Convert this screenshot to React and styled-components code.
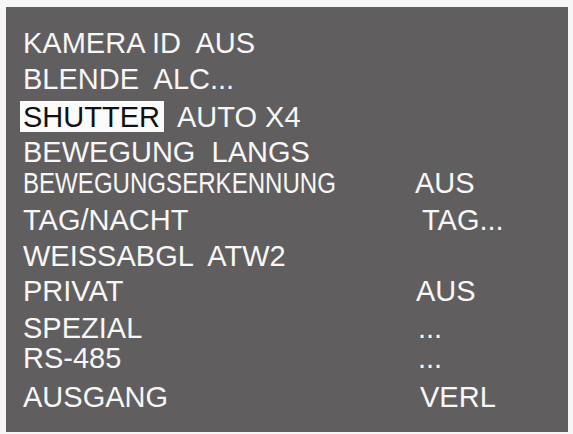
import React from "react";
import styled, { createGlobalStyle } from "styled-components";

const Global = createGlobalStyle`
  html, body {
    margin: 0;
    padding: 0;
    background: #f6f6f6;
  }
`;

// css
const Page = styled.div`
  width: 573px;
  height: 434px;
  padding: 7px 5px 2px 6px;
  box-sizing: border-box;
`;

const Screen = styled.div`
  width: 100%;
  height: 100%;
  background: #615e5f;
  box-sizing: border-box;
  padding: 22px 0 0 17px;
  display: flex;
  flex-direction: column;
  font-family: "Liberation Sans", Arial, sans-serif;
  font-size: 29px;
  color: #f7f7f7;
`;

const Row = styled.div`
  display: grid;
  grid-template-columns: 392px auto;
  height: 28px;
  line-height: 28px;
  margin-top: ${(props) => props.top || 0}px;
  white-space: pre;
`;

const Label = styled.div`
  display: flex;
  align-items: flex-start;
`;

const Narrow = styled.span`
  display: inline-block;
  transform: scaleX(0.83);
  transform-origin: left center;
`;

const Highlight = styled.span`
  display: inline-block;
  background: #fbfbfb;
  color: #111;
  padding: 2px 4px 1px 3px;
  margin: -2px 0 -1px -3px;
  line-height: 28px;
`;

const After = styled.span`
  margin-left: 13px;
`;

const Value = styled.div`
  padding-left: ${(props) => props.shift || 0}px;
`;

const rows = [
  { label: "KAMERA ID  AUS", top: 0 },
  { label: "BLENDE  ALC...", top: 8 },
  { label: "SHUTTER", after: "AUTO X4", selected: true, top: 10 },
  { label: "BEWEGUNG  LANGS", top: 7 },
  { label: "BEWEGUNGSERKENNUNG", narrow: true, value: "AUS", shift: 0, top: 3 },
  { label: "TAG/NACHT", value: "TAG...", shift: 7, top: 9 },
  { label: "WEISSABGL  ATW2", top: 8 },
  { label: "PRIVAT", value: "AUS", shift: 1, top: 7 },
  { label: "SPEZIAL", value: "...", shift: 3, top: 9 },
  { label: "RS-485", value: "...", shift: 3, top: 2 },
  { label: "AUSGANG", value: "VERL", shift: 5, top: 11 },
];

export default function App() {
  return (
    <>
      <Global />
      <Page>
        <Screen>
          {rows.map((r) => (
            <Row key={r.label} top={r.top}>
              <Label>
                {r.selected ? (
                  <Highlight>{r.label}</Highlight>
                ) : r.narrow ? (
                  <Narrow>{r.label}</Narrow>
                ) : (
                  r.label
                )}
                {r.after && <After>{r.after}</After>}
              </Label>
              {r.value && <Value shift={r.shift}>{r.value}</Value>}
            </Row>
          ))}
        </Screen>
      </Page>
    </>
  );
}
